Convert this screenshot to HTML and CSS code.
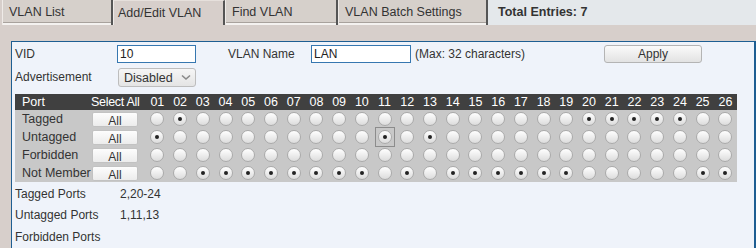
FILE: index.html
```html
<!DOCTYPE html>
<html lang="en">
<head>
    <meta charset="UTF-8">
    <title>Add/Edit VLAN</title>
    <link rel="stylesheet" href="styles.css">
</head>
<body>
    <div class="tabs">
        <div class="tab">VLAN List</div>
        <div class="tab active">Add/Edit VLAN</div>
        <div class="tab tab-find">Find VLAN</div>
        <div class="tab tab-batch">VLAN Batch Settings</div>
        <div class="tab-info">Total Entries: 7</div>
    </div>

    <div class="panel">
        <div class="form-row">
            <label class="lbl lbl-vid">VID</label>
            <input type="text" class="txt txt-vid" value="10">
            <label class="lbl lbl-name">VLAN Name</label>
            <input type="text" class="txt txt-name" value="LAN">
            <span class="hint">(Max: 32 characters)</span>
            <button class="btn-apply">Apply</button>
        </div>
        <div class="form-row">
            <label class="lbl lbl-vid">Advertisement</label>
            <div class="select">Disabled
                <svg class="chev" width="10" height="7" viewBox="0 0 10 7"><path d="M1 1.5 L5 5 L9 1.5" fill="none" stroke="#8a8a8a" stroke-width="1.6"/></svg>
            </div>
        </div>

        <table class="ports" id="ports">
            <colgroup>
                <col class="c-port"><col class="c-all">
            </colgroup>
            <thead>
                <tr id="headRow">
                    <th class="th-port">Port</th>
                    <th class="th-all">Select All</th>
                </tr>
            </thead>
            <tbody id="portBody"></tbody>
        </table>

        <div class="summary">
            <div class="sum-row"><span class="sum-lbl">Tagged Ports</span><span>2,20-24</span></div>
            <div class="sum-row"><span class="sum-lbl">Untagged Ports</span><span>1,11,13</span></div>
            <div class="sum-row"><span class="sum-lbl">Forbidden Ports</span><span></span></div>
        </div>
    </div>

<script src="ports.js"></script>
</body>
</html>
```

FILE: ports.js
```js
var rows = [
    { name: 'Tagged', on: [2, 20, 21, 22, 23, 24] },
    { name: 'Untagged', on: [1, 11, 13] },
    { name: 'Forbidden', on: [] },
    { name: 'Not Member', on: [3, 4, 5, 6, 7, 8, 9, 10, 12, 14, 15, 16, 17, 18, 19, 25, 26] }
];

var headRow = document.getElementById('headRow');
var body = document.getElementById('portBody');
var cols = document.querySelector('#ports colgroup');

for (var p = 1; p <= 26; p++) {
    var th = document.createElement('th');
    th.textContent = p < 10 ? '0' + p : '' + p;
    headRow.appendChild(th);
    cols.appendChild(document.createElement('col'));
}

rows.forEach(function (row, r) {
    var tr = document.createElement('tr');
    var label = tr.insertCell(-1);
    label.className = 'row-lbl';
    label.textContent = row.name;
    var all = tr.insertCell(-1);
    all.innerHTML = '<button class="btn-all">All</button>';

    for (var p = 1; p <= 26; p++) {
        var td = tr.insertCell(-1);
        var radio = document.createElement('span');
        radio.className = 'radio';
        if (row.on.indexOf(p) !== -1) radio.className += ' checked';
        // port 11 untagged has keyboard focus in the original
        if (r === 1 && p === 11) radio.className += ' focus';
        td.appendChild(radio);
    }
    body.appendChild(tr);
});
```

FILE: styles.css
```css
html, body {
    overflow: hidden;
}
body {
    margin: 0;
    height: 248px;
    background: #d7cfcb;
    font-family: "Liberation Sans", Arial, sans-serif;
    font-size: 12px;
    color: #333;
}

/* tab strip */
.tabs {
    display: flex;
    height: 25px;
}
.tab {
    box-sizing: border-box;
    width: 113px;
    height: 25px;
    padding: 5px 0 0 6px;
    background: #d6d0cb;
    border-left: 1px solid #efebe8;
    border-right: 2px solid #555;
    box-shadow: inset 0 -2px 0 #f4f2f0, inset 0 -3px 0 #a8a29d;
    font-size: 12.5px;
}
.tab:first-child {
    margin-left: 2px;
    width: 111px;
}
.tab.active {
    background: #d7cfcb;
    box-shadow: none;
    border-top: 1px solid #e6e0dc;
    padding-left: 4px;
    width: 112px;
}
.tab-find {
    width: 113px;
}
.tab-batch {
    width: 150px;
}
.tab-info {
    flex: 1;
    background: #e4e8eb;
    font-weight: bold;
    padding: 5px 0 0 10px;
    font-size: 12.5px;
}

/* main panel */
.panel {
    margin: 16px 0 0 11px;
    height: 203px;
    background: #eff3fa;
    border: 1px solid #1e5e92;
    border-right-width: 2px;
    border-bottom: none;
    padding: 3px 0 0 3px;
}

.form-row {
    display: flex;
    align-items: center;
    height: 18px;
    margin-bottom: 5px;
}
.lbl-vid {
    width: 102px;
}
.lbl-name {
    width: 83px;
    margin-left: 32px;
}
.txt {
    box-sizing: border-box;
    height: 18px;
    border: 1px solid #3677b0;
    background: #fff;
    font-family: "Liberation Sans", Arial, sans-serif;
    font-size: 12px;
    padding: 0 2px;
    color: #222;
}
.txt-vid {
    width: 79px;
}
.txt-name {
    width: 100px;
}
.hint {
    margin-left: 4px;
    width: 189px;
}
.btn-apply {
    box-sizing: border-box;
    width: 98px;
    height: 18px;
    border: 1px solid #b4b4b4;
    border-radius: 3px;
    background: linear-gradient(#fafafa, #e2e2e2);
    font-family: "Liberation Sans", Arial, sans-serif;
    font-size: 12px;
    color: #333;
    padding: 0;
}
.select {
    box-sizing: border-box;
    width: 78px;
    height: 19px;
    margin-left: 1px;
    border: 1px solid #bdbdbd;
    border-radius: 3px;
    background: linear-gradient(#f6f6f6, #e4e4e4);
    padding: 2px 0 0 5px;
    font-size: 12.5px;
    position: relative;
}
.chev {
    position: absolute;
    right: 4px;
    top: 5px;
}

/* port table */
.ports {
    table-layout: fixed;
    border-collapse: collapse;
    width: 722px;
    margin-top: 8px;
    background: #c8c8c8;
}
.c-port {
    width: 75px;
}
.c-all {
    width: 56px;
}
.ports th {
    background: #404040;
    color: #fff;
    font-weight: normal;
    height: 16px;
    padding: 0;
    text-align: center;
    font-size: 12.5px;
}
.ports th.th-port {
    text-align: left;
    padding-left: 7px;
}
.ports th.th-all {
    text-align: left;
    padding-left: 1px;
    letter-spacing: -0.3px;
}
.ports td {
    height: 18px;
    padding: 0;
    text-align: center;
    vertical-align: middle;
}
.ports td.row-lbl {
    text-align: left;
    padding-left: 7px;
    font-size: 12.5px;
    white-space: nowrap;
}
.btn-all {
    display: block;
    box-sizing: border-box;
    width: 46px;
    height: 15px;
    margin: 0 0 0 2px;
    padding: 2px 0 0;
    border: 1px solid #c2c2c2;
    border-radius: 2px;
    background: linear-gradient(#fdfdfd, #ececec);
    font-family: "Liberation Sans", Arial, sans-serif;
    font-size: 12px;
    color: #333;
    line-height: 12px;
}
.radio {
    display: inline-block;
    box-sizing: border-box;
    width: 14px;
    height: 14px;
    border-radius: 50%;
    border: 1px solid #a9a9a9;
    background: linear-gradient(#ffffff, #dcdcdc);
    vertical-align: middle;
    position: relative;
}
.radio.checked::after {
    content: "";
    position: absolute;
    left: 4px;
    top: 4px;
    width: 4px;
    height: 4px;
    border-radius: 50%;
    background: #222;
}
.radio.focus::before {
    content: "";
    position: absolute;
    left: -4px;
    top: -4px;
    width: 18px;
    height: 18px;
    border: 1px solid #8c8c8c;
}

/* summary */
.summary {
    margin-top: 1px;
}
.sum-row {
    display: flex;
    height: 21.5px;
    align-items: center;
}
.sum-lbl {
    width: 105px;
}
```
